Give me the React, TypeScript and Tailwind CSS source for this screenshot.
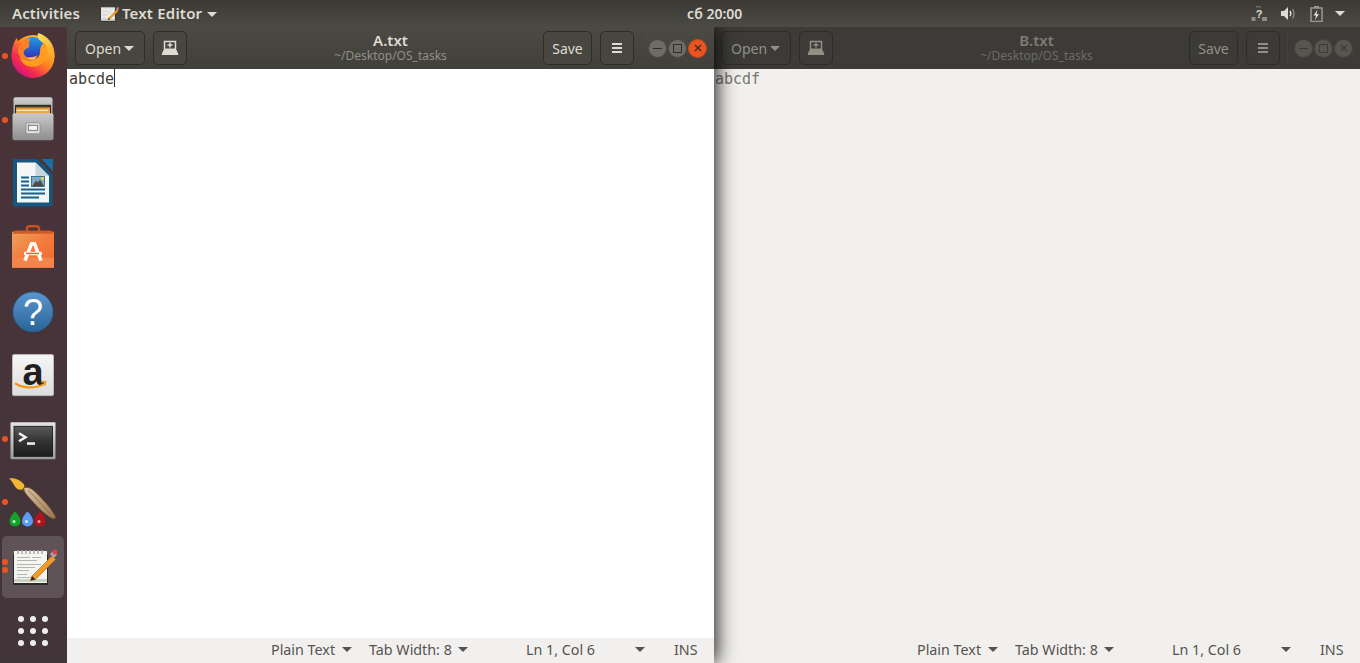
const uiFont = { fontFamily: '"Noto Sans", sans-serif' };

function Caret({ className }: { className: string }) {
  return (
    <svg width="10" height="5" viewBox="0 0 10 5" className={className}>
      <path d="M0 0h10L5 5z" fill="currentColor" />
    </svg>
  );
}

function FirefoxIcon() {
  return (
    <svg width="48" height="48" viewBox="9 32 48 48">
      <defs>
        <linearGradient id="ffBody" x1="0.85" y1="0.1" x2="0.2" y2="0.9">
          <stop offset="0" stopColor="#ffc53a" />
          <stop offset="0.45" stopColor="#ff8a1f" />
          <stop offset="0.8" stopColor="#f5284f" />
          <stop offset="1" stopColor="#d3157f" />
        </linearGradient>
        <linearGradient id="ffGlobe" x1="0.5" y1="0" x2="0.5" y2="1">
          <stop offset="0" stopColor="#1f9be6" />
          <stop offset="0.6" stopColor="#2a4fc4" />
          <stop offset="1" stopColor="#3a1f9e" />
        </linearGradient>
        <linearGradient id="ffTail" x1="0.2" y1="0" x2="0.8" y2="1">
          <stop offset="0" stopColor="#f3e05c" />
          <stop offset="1" stopColor="#ffa322" />
        </linearGradient>
        <linearGradient id="ffLeft" x1="0.5" y1="0" x2="0.3" y2="1">
          <stop offset="0" stopColor="#ff8a24" />
          <stop offset="1" stopColor="#f0245a" />
        </linearGradient>
      </defs>
      <circle cx="33" cy="56.500" r="21.500" fill="url(#ffBody)" />
      <path d="M11.500 56C12 49 13 44 16.500 38l2 4 7-1-6 16z" fill="url(#ffLeft)" />
      <circle cx="33" cy="50" r="13" fill="url(#ffGlobe)" />
      <path d="M43.500 43c5 5 5 13 1 18-4 5-11 7-17 5-5-2-7-6-7.500-10 3 4 8 5 12 4 5-1 8-4 8-8 0-4 1-7 3.500-9z" fill="#ff9b1e" />
      <path d="M38 33c10 3 17.500 11 16.500 25-1.500-7-5-11-9.500-14-5-3-8.500-5-7-11z" fill="url(#ffTail)" />
      <path d="M24 40c2-1 5-1.500 7-1-2 2-2.500 4-2 6 1 2-1 3-3 4-2 1-3 3-2 5 1 3 4 4 7 3 2 0 5-1 7-2-2 3-6 5-10 5-5 0-9-3-10-8 0-5 2-9 6-12z" fill="#ff7f24" />
      <path d="M27 57c3 2 7 1 10-1l-2 3c-3 1-6 1-8-2z" fill="#ffd08a" />
    </svg>
  );
}

function FilesIcon() {
  return (
    <svg width="48" height="48" viewBox="9 95.700 48 48">
      <defs>
        <linearGradient id="cabTop" x1="0" y1="0" x2="0" y2="1">
          <stop offset="0" stopColor="#cfcfcf" />
          <stop offset="1" stopColor="#9a9a9a" />
        </linearGradient>
        <linearGradient id="cabFront" x1="0" y1="0" x2="0" y2="1">
          <stop offset="0" stopColor="#c9c9c9" />
          <stop offset="1" stopColor="#8e8e8e" />
        </linearGradient>
      </defs>
      <rect x="13.500" y="97" width="39" height="20" rx="2" fill="url(#cabTop)" />
      <rect x="15" y="104.500" width="36" height="10" fill="#2c2a28" />
      <rect x="16" y="107" width="34" height="7" fill="#f0a24e" />
      <rect x="16" y="106.500" width="34" height="1.500" fill="#c9622a" />
      <rect x="17" y="109.500" width="31" height="1" fill="#fff4dc" />
      <rect x="12.500" y="113" width="41" height="27" rx="2" fill="url(#cabFront)" />
      <rect x="26" y="122.500" width="14" height="11" rx="1.500" fill="#dcdcdc" stroke="#8a8a8a" strokeWidth="0.800" />
      <rect x="28.500" y="125" width="9" height="5" fill="#f4f4f4" stroke="#666" strokeWidth="0.800" />
    </svg>
  );
}

function WriterIcon() {
  return (
    <svg width="48" height="48" viewBox="9 159.500 48 48">
      <path d="M15 159h22l15.500 16v29a3 3 0 0 1-3 3H15a2 2 0 0 1-2-2V161a2 2 0 0 1 2-2z" fill="#17577f" />
      <path d="M41 159h12v13z" fill="#1a6ea8" />
      <path d="M17 163h18.500L49 176.500V203H17z" fill="#f4f6f6" />
      <path d="M35.500 163v13.500H49z" fill="#c8d4dc" />
      <g fill="#17608f">
        <rect x="21" y="177" width="8" height="2" />
        <rect x="21" y="181" width="8" height="2" />
        <rect x="21" y="185" width="8" height="2" />
        <rect x="21" y="189" width="24" height="2" />
        <rect x="21" y="193" width="24" height="2" />
        <rect x="21" y="197" width="18" height="2" />
      </g>
      <rect x="31.500" y="177" width="13" height="10" fill="#7fa9c6" stroke="#17608f" strokeWidth="0.800" />
      <path d="M32 187l4-6 2 2 2-3 4 7z" fill="#4a4a4a" />
      <rect x="41" y="177.500" width="3" height="3" fill="#e8c84a" />
    </svg>
  );
}

function SoftwareIcon() {
  return (
    <svg width="48" height="48" viewBox="9 223.300 48 48">
      <defs>
        <linearGradient id="bag" x1="0" y1="0" x2="1" y2="1">
          <stop offset="0" stopColor="#eda25e" />
          <stop offset="0.5" stopColor="#f27b3c" />
          <stop offset="1" stopColor="#f06a2c" />
        </linearGradient>
      </defs>
      <path d="M27 235v-6a2.500 2.500 0 0 1 2.500-2.500h7a2.500 2.500 0 0 1 2.500 2.500v6" fill="none" stroke="#c8501f" strokeWidth="2.500" />
      <path d="M15 231h36l3 7H12z" fill="#d9622a" />
      <rect x="12" y="232" width="42" height="36" fill="url(#bag)" />
      <rect x="12" y="258" width="42" height="10" fill="#f4854a" />
      <path d="M15 231h36l3 3H12z" fill="#d05a26" />
      <path d="M25 261l6.500-17h3l6.500 17" fill="none" stroke="#fff" strokeWidth="3.500" />
      <rect x="24" y="252" width="18" height="3.500" rx="1" fill="#fff" />
      <rect x="26" y="253" width="13" height="1.500" fill="#f0602a" />
    </svg>
  );
}

function HelpIcon() {
  return (
    <svg width="48" height="48" viewBox="9 287.100 48 48">
      <defs>
        <linearGradient id="help" x1="0" y1="0" x2="0" y2="1">
          <stop offset="0" stopColor="#5b97cf" />
          <stop offset="1" stopColor="#2a6498" />
        </linearGradient>
      </defs>
      <circle cx="33" cy="313" r="20" fill="#2a2a30" opacity="0.3" />
      <circle cx="33" cy="312" r="20" fill="url(#help)" stroke="#2b5f92" />
      <text x="33" y="325" textAnchor="middle" fontSize="36" fontFamily='"Liberation Sans", sans-serif' fill="#fff">
        ?
      </text>
    </svg>
  );
}

function AmazonIcon() {
  return (
    <svg width="48" height="48" viewBox="9 350.900 48 48">
      <defs>
        <linearGradient id="amz" x1="0" y1="0" x2="0" y2="1">
          <stop offset="0" stopColor="#f6f6f6" />
          <stop offset="1" stopColor="#dcdcdc" />
        </linearGradient>
      </defs>
      <rect x="12.500" y="354.500" width="41" height="41" rx="1.500" fill="url(#amz)" stroke="#bbb" />
      <text x="33" y="385" textAnchor="middle" fontSize="38" fontWeight="700" fontFamily='"Liberation Sans", sans-serif' fill="#1f1f1f">
        a
      </text>
      <path d="M15 383c6 5 20 6 29 1" fill="none" stroke="#f49a0e" strokeWidth="2.200" />
      <path d="M41 382l4.500-.5-.5 4" fill="none" stroke="#f49a0e" strokeWidth="1.500" />
    </svg>
  );
}

function TerminalIcon() {
  return (
    <svg width="48" height="48" viewBox="9 414.700 48 48">
      <defs>
        <linearGradient id="term" x1="0" y1="0" x2="0" y2="1">
          <stop offset="0" stopColor="#5b5b5b" />
          <stop offset="0.5" stopColor="#333" />
          <stop offset="1" stopColor="#1d1d1d" />
        </linearGradient>
        <linearGradient id="termFrame" x1="0" y1="0" x2="0" y2="1">
          <stop offset="0" stopColor="#e4e4e4" />
          <stop offset="1" stopColor="#9a9a9a" />
        </linearGradient>
      </defs>
      <rect x="10.500" y="422" width="45" height="37" rx="1" fill="url(#termFrame)" />
      <rect x="14" y="426" width="38.500" height="30" fill="url(#term)" stroke="#111" strokeWidth="0.800" />
      <path d="M19 433l6.500 4-6.500 4" fill="none" stroke="#f2f2f2" strokeWidth="2.500" />
      <rect x="27" y="442" width="8" height="2.500" fill="#f2f2f2" />
    </svg>
  );
}

function PaintIcon() {
  return (
    <svg width="48" height="48" viewBox="9 478.500 48 48" overflow="visible">
      <defs>
        <linearGradient id="handle" x1="0" y1="0" x2="1" y2="1">
          <stop offset="0" stopColor="#d9c4a6" />
          <stop offset="1" stopColor="#9a7450" />
        </linearGradient>
      </defs>
      <path d="M9 479c6-1 12 2 15 6 1 2 0 4-2 5-3 1-6-1-7-3-2-3-3-6-6-8z" fill="#f2b632" />
      <path d="M22 491l3-4 2 1-3 4z" fill="#6e5230" />
      <path d="M24 488c4-1 8 1 12 5 7 7 14 14 19 23 1 3 0 4-3 3-9-5-16-13-23-21-3-3-6-7-5-10z" fill="url(#handle)" stroke="#6b4a28" strokeWidth="1" />
      <path d="M28 491c6 5 15 15 23 25" fill="none" stroke="#8a6a48" strokeWidth="0.800" />
      <path d="M15 512c2 2 5.500 6 5.500 10a5.500 5 0 0 1-11 0c0-4 3.500-8 5.500-10z" fill="#12a32c" />
      <path d="M27.500 512c2 2 5.500 6 5.500 10a5.500 5 0 0 1-11 0c0-4 3.500-8 5.500-10z" fill="#5a9cf5" />
      <path d="M40 512c2 2 5.500 6 5.500 10a5.500 5 0 0 1-11 0c0-4 3.500-8 5.500-10z" fill="#b4121c" />
      <circle cx="14" cy="522" r="1.500" fill="#c8f5c8" />
      <circle cx="26.500" cy="522" r="1.500" fill="#dbe9ff" />
      <circle cx="39" cy="522" r="1.500" fill="#f0a0a0" />
    </svg>
  );
}

function GeditIcon({ size }: { size: number }) {
  return (
    <svg width={size} height={size} viewBox="9 543 48 48">
      <rect x="13" y="554" width="35" height="31" rx="1" fill="#2a2a2a" />
      <rect x="14" y="551" width="33" height="32" fill="#f4f4f0" />
      <rect x="14" y="579" width="33" height="3" fill="#c9d2c2" />
      <g fill="#b5b5b0">
        <rect x="17" y="557" width="13" height="1" />
        <rect x="32" y="557" width="9" height="1" />
        <rect x="17" y="560" width="20" height="1" />
        <rect x="17" y="564" width="24" height="1" />
        <rect x="17" y="567" width="18" height="1" />
        <rect x="17" y="570" width="12" height="1" />
        <rect x="17" y="574" width="10" height="1" />
        <rect x="17" y="577" width="15" height="1" />
      </g>
      <g fill="none" stroke="#a8a8a8" strokeWidth="1.500">
        <path d="M18 554v-4" />
        <path d="M22 554v-4" />
        <path d="M26 554v-4" />
        <path d="M30 554v-4" />
        <path d="M34 554v-4" />
        <path d="M38 554v-4" />
        <path d="M42 554v-4" />
      </g>
      <path d="M32 576l20-20 3.500 3.500-20 20-5 1z" fill="#f09a2a" stroke="#c06e14" strokeWidth="0.600" />
      <path d="M30.500 580.500l1.500-4.500 3.500 3.500z" fill="#2a2a2a" />
      <path d="M50 554l3-3 4 4-3 3z" fill="#a8a8a8" />
      <circle cx="55" cy="552" r="2.500" fill="#e0424a" />
    </svg>
  );
}

function NewTabIcon() {
  return (
    <svg width="18" height="16" viewBox="0 0 18 16" fill="none" stroke="currentColor">
      <path d="M3.500 9V1.500h11V9" strokeWidth="1.500" />
      <path d="M1 14.500l2.500-5.500h11l2.500 5.500z" fill="currentColor" strokeWidth="1" />
      <path d="M9 2.500v5M6.500 5h5" strokeWidth="1.500" />
    </svg>
  );
}

function NetworkIcon() {
  return (
    <svg width="16" height="16" viewBox="0 0 16 16" className="text-[#8e8c84]">
      <rect x="0.500" y="11" width="4" height="4" fill="currentColor" />
      <rect x="5" y="0" width="5" height="1.500" fill="currentColor" opacity="0.600" />
      <rect x="11" y="11" width="5" height="4" fill="currentColor" />
      <text x="8" y="12" textAnchor="middle" fontSize="11" fontWeight="700" fontFamily='"Liberation Sans", sans-serif' fill="#dfdbd2">
        ?
      </text>
    </svg>
  );
}

function VolumeIcon() {
  return (
    <svg width="16" height="16" viewBox="0 0 16 16">
      <path d="M1 5h3l4-4v13l-4-4H1z" fill="#dfdbd2" />
      <path d="M10 5c1 1.500 1 3.500 0 5" fill="none" stroke="#dfdbd2" strokeWidth="1.500" />
      <path d="M12.500 3c2 3 2 6.500 0 9.500" fill="none" stroke="#8e8c84" strokeWidth="1.300" />
    </svg>
  );
}

function BatteryIcon() {
  return (
    <svg width="13" height="16" viewBox="0 0 13 16">
      <rect x="4" y="0" width="5" height="2" fill="#9a988f" />
      <rect x="1" y="2" width="11" height="13.500" fill="none" stroke="#9a988f" strokeWidth="1.500" />
      <path d="M7.500 3.500L3.500 9.500h2.500l-1 4.500 4-6H6.500z" fill="#dfdbd2" />
    </svg>
  );
}

function TopBar() {
  return (
    <div
      style={uiFont}
      className="relative z-20 grid h-[27px] grid-cols-[687px_auto_1fr] items-center bg-gradient-to-b from-[#3a3934] to-[#4b4a43] text-[15px] text-[#dfdbd2]"
    >
      <div className="flex items-center">
        <span className="ml-3 font-semibold tracking-[0.1px]">Activities</span>
        <span className="ml-[19px]">
          <GeditIcon size={20} />
        </span>
        <span className="ml-[3px] font-semibold tracking-[0.2px]">Text Editor</span>
        <Caret className="ml-[5px] mt-px" />
      </div>
      <div className="text-[14px] font-semibold">сб 20:00</div>
      <div className="flex items-center justify-end">
        <NetworkIcon />
        <span className="ml-[13px]">
          <VolumeIcon />
        </span>
        <span className="ml-[14px]">
          <BatteryIcon />
        </span>
        <Caret className="ml-[12px] mr-[15px]" />
      </div>
    </div>
  );
}

function DockItem({ dots = 0, children }: { dots?: number; children: React.ReactNode }) {
  return (
    <div className="relative flex h-[63.8px] w-[67px] items-center justify-center pr-px">
      <div className="absolute inset-y-0 left-[2px] z-10 flex flex-col justify-center gap-[2px]">
        {Array.from({ length: dots }).map((_, i) => (
          <span key={i} className="block size-[6px] rounded-full bg-[#e95420]" />
        ))}
      </div>
      {children}
    </div>
  );
}

function Dock() {
  return (
    <div className="relative z-20 h-[636px] w-[67px] shrink-0 overflow-hidden bg-gradient-to-b from-[#4a3339] to-[#42353a]">
      <div className="-mt-[3px] flex flex-col">
        <DockItem dots={1}>
          <FirefoxIcon />
        </DockItem>
        <DockItem dots={1}>
          <FilesIcon />
        </DockItem>
        <DockItem>
          <WriterIcon />
        </DockItem>
        <DockItem>
          <SoftwareIcon />
        </DockItem>
        <DockItem>
          <HelpIcon />
        </DockItem>
        <DockItem>
          <AmazonIcon />
        </DockItem>
        <DockItem dots={1}>
          <TerminalIcon />
        </DockItem>
        <DockItem dots={1}>
          <PaintIcon />
        </DockItem>
        <DockItem dots={2}>
          <div className="mt-[1.4px] flex h-[62px] w-[62px] items-center justify-center rounded-[5px] bg-white/15">
            <GeditIcon size={48} />
          </div>
        </DockItem>
        <DockItem>
          <div className="mt-[2px] grid grid-cols-3 gap-[6px]">
            {Array.from({ length: 9 }).map((_, i) => (
              <span key={i} className="block size-[6px] rounded-full bg-[#eeeeec]" />
            ))}
          </div>
        </DockItem>
      </div>
    </div>
  );
}

function HeaderButton({ active, className, children }: { active: boolean; className: string; children: React.ReactNode }) {
  return (
    <div
      className={`flex h-[34px] items-center justify-center rounded-[5px] border ${className} ${
        active ? "border-[#2e2d29] bg-[#47463f] text-[#dfdbd2]" : "border-[#2e2d29] bg-[#3c3b37] text-[#918f86]"
      }`}
    >
      {children}
    </div>
  );
}

function WindowControls({ active }: { active: boolean }) {
  const base = active ? "bg-[#6d6b63] border-[#4a4942]" : "bg-[#56554e] border-[#45443e]";
  const mark = active ? "#2f2e2a" : "#3c3b37";
  return (
    <div className="flex items-center gap-px">
      <div className={`flex size-[19px] items-center justify-center rounded-full border ${base}`}>
        <span className="block h-px w-[9px]" style={{ background: mark }} />
      </div>
      <div className={`flex size-[19px] items-center justify-center rounded-full border ${base}`}>
        <span className="block size-[9px] border" style={{ borderColor: mark }} />
      </div>
      <div
        className={`flex size-[19px] items-center justify-center rounded-full border ${
          active ? "border-[#c9471a] bg-[#e95420]" : base
        }`}
      >
        <svg width="8" height="8" viewBox="0 0 8 8" fill="none" stroke={mark} strokeWidth="1.200">
          <path d="M1 1l6 6M7 1L1 7" />
        </svg>
      </div>
    </div>
  );
}

function EditorWindow({ active, title, body }: { active: boolean; title: string; body: string }) {
  return (
    <div
      style={uiFont}
      className={`flex h-[636px] w-[647px] shrink-0 flex-col ${
        active ? "relative z-10 shadow-[3px_0_18px_rgba(0,0,0,0.85)]" : "-ml-px"
      }`}
    >
      <div
        className={`grid h-[42px] shrink-0 grid-cols-[1fr_auto_1fr] items-center ${
          active ? "bg-gradient-to-b from-[#4c4a43] to-[#403f3a]" : "bg-[#3c3b37]"
        }`}
      >
        <div className="ml-2 flex items-center gap-2">
          <HeaderButton active={active} className="w-[70px] gap-[3px] text-[14px]">
            <span className="-ml-px">Open</span>
            <Caret className="" />
          </HeaderButton>
          <HeaderButton active={active} className="w-[34px]">
            <NewTabIcon />
          </HeaderButton>
        </div>
        <div className="flex flex-col items-center">
          <span className={`text-[15px] font-semibold leading-[15px] ${active ? "text-[#dfdbd2]" : "text-[#7e7c74]"}`}>{title}</span>
          <span className={`text-[12px] leading-[16px] ${active ? "text-[#918f86]" : "text-[#6d6b63]"}`}>~/Desktop/OS_tasks</span>
        </div>
        <div className="flex items-center justify-end">
          <HeaderButton active={active} className="w-[49px] text-[14px]">
            Save
          </HeaderButton>
          <HeaderButton active={active} className="ml-2 w-[34px]">
            <svg width="10" height="10" viewBox="0 0 10 10" fill="currentColor">
              <rect y="0" width="10" height="2" />
              <rect y="4" width="10" height="2" />
              <rect y="8" width="10" height="2" />
            </svg>
          </HeaderButton>
          <span className="ml-[7px] h-[32px] w-px bg-[#45443e]" />
          <span className="ml-[6px] mr-[7px]">
            <WindowControls active={active} />
          </span>
        </div>
      </div>
      <div
        className={`flex-1 pl-[2px] pt-px font-['DejaVu_Sans_Mono',monospace] text-[15px] leading-[18px] ${
          active ? "bg-white text-[#3d3c38]" : "bg-[#f1f0ee] text-[#77766f]"
        }`}
      >
        <span className="relative">
          {body}
          {active && <span className="absolute -top-px left-full h-[18px] w-px bg-[#2e2d29]" />}
        </span>
      </div>
      <div className="flex h-[25px] shrink-0 items-center whitespace-nowrap bg-[#f1f0ee] pb-[2px] text-[14.3px] text-[#55534e]">
        <span className="ml-[204px] w-[65px]">Plain Text</span>
        <Caret className="ml-[6px]" />
        <span className="ml-[17px] w-[83px]">Tab Width: 8</span>
        <Caret className="ml-[6px]" />
        <span className="ml-[58px] w-[67px]">Ln 1, Col 6</span>
        <Caret className="ml-[42px]" />
        <span className="ml-[29px]">INS</span>
      </div>
    </div>
  );
}

export default function App() {
  return (
    <div className="h-[663px] w-[1360px] overflow-hidden bg-[#3c3b37]">
      <TopBar />
      <div className="flex">
        <Dock />
        <EditorWindow active title="A.txt" body="abcde" />
        <EditorWindow active={false} title="B.txt" body="abcdf" />
      </div>
    </div>
  );
}
